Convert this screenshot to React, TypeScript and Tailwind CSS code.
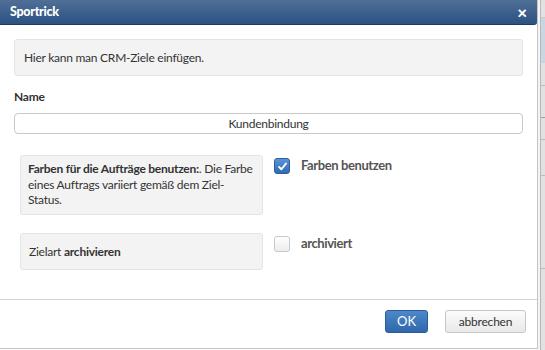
import React, { useState } from 'react';

const font = { fontFamily: 'Lato, "Open Sans", Arial, sans-serif' };

function Checkbox({ checked, onChange }: { checked: boolean; onChange: () => void }) {
  return (
    <button
      onClick={onChange}
      className={
        checked
          ? 'w-[16px] h-[16px] rounded-[3px] border border-[#2a5f9e] bg-gradient-to-b from-[#5a93d6] to-[#2f6bb4] flex items-center justify-center'
          : 'w-[16px] h-[16px] rounded-[3px] border border-[#c8c8c8] bg-gradient-to-b from-[#ffffff] to-[#ececec]'
      }
    >
      {checked && (
        <svg viewBox="0 0 12 12" className="w-[11px] h-[11px]">
          <path d="M2.2 6.4 L4.8 9 L9.8 2.8" fill="none" stroke="white" strokeWidth="2" strokeLinecap="round" strokeLinejoin="round" />
        </svg>
      )}
    </button>
  );
}

export default function App() {
  const [name, setName] = useState('Kundenbindung');
  const [useColors, setUseColors] = useState(true);
  const [archived, setArchived] = useState(false);

  return (
    <div className="flex w-[545px] h-[350px] bg-white overflow-hidden" style={font}>
      {/* dialog */}
      <div className="w-[538px] h-[349px] flex flex-col border-r border-b border-[#c4c4c4] bg-white">
        <div className="h-[25px] flex items-center justify-between pl-[10px] pr-[10px] bg-gradient-to-b from-[#4f6f96] to-[#2b5283] border-b border-[#1e3a5f] rounded-br-[3px]">
          <span className="text-white text-[12.5px] font-black tracking-[-0.3px]">Sportrick</span>
          <span className="text-white text-[17px] font-black leading-none">×</span>
        </div>

        <div className="flex-1 px-[14px] pt-[14px] text-[12px] tracking-[-0.25px]">
          <div className="h-[37px] flex items-center px-[9px] bg-[#f3f3f3] border border-[#e4e4e4] rounded-[3px] text-[#333]">
            Hier kann man CRM-Ziele einfügen.
          </div>

          <div className="mt-[12px] font-bold text-[#333]">Name</div>

          <input
            value={name}
            onChange={(e) => setName(e.target.value)}
            className="mt-[7px] w-full h-[21px] border border-[#c9c9c9] rounded-[4px] text-center text-[12px] tracking-[-0.25px] text-[#333] outline-none"
            style={font}
          />

          <div className="mt-[21px] pl-[6px] flex gap-[11px]">
            <div className="w-[243px] h-[60px] px-[7px] pt-[5px] bg-[#f3f3f3] border border-[#e4e4e4] rounded-[3px] leading-[15.5px] text-[#333]">
              <b>Farben für die Aufträge benutzen:</b>. Die Farbe eines Auftrags variiert gemäß dem Ziel-Status.
            </div>
            <div className="pt-[3px]">
              <Checkbox checked={useColors} onChange={() => setUseColors(!useColors)} />
            </div>
            <span className="pt-[1px] text-[13px] font-bold text-[#555] tracking-[-0.4px]">Farben benutzen</span>
          </div>

          <div className="mt-[18px] pl-[6px] flex gap-[11px]">
            <div className="w-[243px] h-[37px] px-[8px] flex items-center bg-[#f3f3f3] border border-[#e4e4e4] rounded-[3px] text-[#333]">
              Zielart&nbsp;<b>archivieren</b>
            </div>
            <div className="pt-[3px]">
              <Checkbox checked={archived} onChange={() => setArchived(!archived)} />
            </div>
            <span className="pt-[1px] text-[13px] font-bold text-[#555] tracking-[-0.4px]">archiviert</span>
          </div>
        </div>

        <div className="h-[49px] border-t border-[#d4d4d4] flex items-start justify-end gap-[17px] pt-[10px] pr-[11px]">
          <button className="w-[43px] h-[23px] rounded-[3px] border border-[#2a5d98] bg-gradient-to-b from-[#4c88cb] to-[#2f68ab] text-white text-[13px]">
            OK
          </button>
          <button className="w-[81px] h-[23px] rounded-[3px] border border-[#c6c6c6] bg-gradient-to-b from-[#fbfbfb] to-[#e9e9e9] text-[#333] text-[12px] tracking-[-0.2px]">
            abbrechen
          </button>
        </div>
      </div>

      {/* page behind the dialog */}
      <div className="flex-1 flex">
        <div className="w-[2px] bg-[#f4f4f4]" />
        <div className="w-[1px] bg-[#b8b8b8]" />
        <div className="flex-1 flex flex-col bg-[#e2e2e2]">
          <div className="h-[17px]" />
          <div className="h-[1px] bg-[#c9c9c9]" />
          <div className="h-[45px] bg-[#c9d6e4]" />
          <div className="h-[22px]" />
          <div className="h-[1px] bg-[#bdbdbd]" />
          <div className="h-[31px]" />
          <div className="h-[1px] bg-[#9e9e9e]" />
          <div className="h-[21px]" />
          <div className="h-[1px] bg-[#bdbdbd]" />
          <div className="h-[35px]" />
          <div className="h-[1px] bg-[#bdbdbd]" />
          <div className="h-[92px]" />
          <div className="h-[1px] bg-[#bdbdbd]" />
        </div>
      </div>
    </div>
  );
}
